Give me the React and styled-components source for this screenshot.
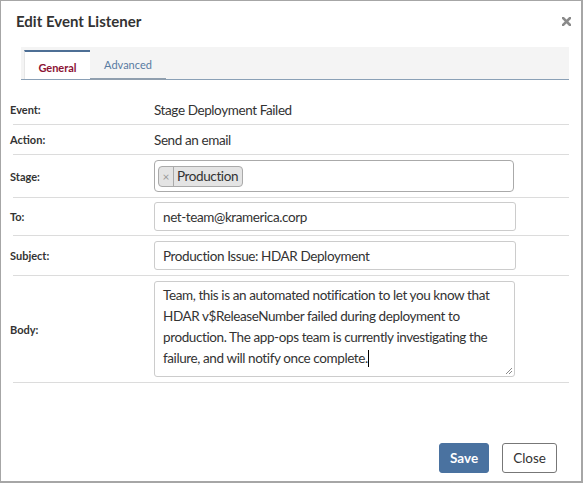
import styled, { createGlobalStyle } from "styled-components";

const GlobalStyle = createGlobalStyle`
  html, body {
    margin: 0;
    padding: 0;
    background: #fff;
  }
  body {
    font-family: "Lato", "Liberation Sans", sans-serif;
    color: #333;
  }
`;

const rows = [
  { label: "Event:", value: "Stage Deployment Failed" },
  { label: "Action:", value: "Send an email" },
];

export default function App() {
  return (
    <>
      <GlobalStyle />
      <Modal>
        <Header>
          <Title>Edit Event Listener</Title>
          <CloseX aria-label="close">
            <svg width="9" height="9" viewBox="0 0 9 9">
              <path d="M1 1 L8 8 M8 1 L1 8" stroke="#8a8a8a" strokeWidth="2.6" strokeLinecap="square" />
            </svg>
          </CloseX>
        </Header>

        <TabBar>
          <Tab $active>General</Tab>
          <Tab>Advanced</Tab>
        </TabBar>

        <Form>
          {rows.map((r) => (
            <Row key={r.label} $pad={5}>
              <Label>{r.label}</Label>
              <Value>{r.value}</Value>
            </Row>
          ))}
          <Row $pad={5}>
            <Label>Stage:</Label>
            <TagBox>
              <Tag>
                <TagRemove>×</TagRemove>
                <TagText>Production</TagText>
              </Tag>
            </TagBox>
          </Row>
          <Row $pad={4}>
            <Label>To:</Label>
            <Input defaultValue="net-team@kramerica.corp" />
          </Row>
          <Row $pad={5}>
            <Label>Subject:</Label>
            <Input defaultValue="Production Issue: HDAR Deployment" />
          </Row>
          <Row $pad={5}>
            <Label>Body:</Label>
            <TextBox>
              Team, this is an automated notification to let you know that
              <br />
              HDAR v$ReleaseNumber failed during deployment to
              <br />
              production. The app-ops team is currently investigating the
              <br />
              failure, and will notify once complete.<Caret />
              <Grip width="8" height="8" viewBox="0 0 8 8">
                <path d="M7 1 L1 7 M7 4 L4 7" stroke="#8a8a8a" strokeWidth="1" />
              </Grip>
            </TextBox>
          </Row>
        </Form>

        <Footer>
          <Button $primary>Save</Button>
          <Button>Close</Button>
        </Footer>
      </Modal>
    </>
  );
}

const Modal = styled.div`
  width: 583px;
  height: 483px;
  box-sizing: border-box;
  border: 1px solid #a6a6a6;
  border-right-width: 2px;
  border-bottom-width: 2px;
  display: flex;
  flex-direction: column;
`;

const Header = styled.div`
  display: flex;
  align-items: center;
  justify-content: space-between;
  padding: 10px 9px 0 15px;
  height: 20px;
`;

const Title = styled.div`
  font-weight: 700;
  font-size: 15px;
  color: #333;
`;

const CloseX = styled.div`
  display: flex;
  width: 12px;
  justify-content: center;
`;

const TabBar = styled.div`
  display: flex;
  align-items: flex-end;
  margin: 16px 12px 0 20px;
  height: 32px;
  background: #f4f4f4;
  border-bottom: 1px solid #8aa0b6;
`;

const Tab = styled.div`
  box-sizing: border-box;
  font-size: 11px;
  ${(p) =>
    p.$active
      ? `
    margin-left: 3px;
    width: 66px;
    height: 29px;
    padding-top: 9px;
    text-align: center;
    background: #fff;
    border-top: 2px solid #4d6f95;
    border-left: 1px solid #e6e6e6;
    color: #8c1234;
    font-weight: 700;
  `
      : `
    width: 76px;
    height: 31px;
    padding-top: 9px;
    text-align: center;
    color: #587ba2;
    border-bottom: 2px solid #909fae;
    margin-bottom: -1px;
  `}
`;

const Form = styled.div`
  margin-top: 15px;
  padding: 0 12px 0 12px;
`;

const Row = styled.div`
  display: flex;
  align-items: center;
  padding: ${(p) => p.$pad}px 0;
  border-bottom: 1px solid #dcdcdc;
  min-height: 19px;
`;

const Label = styled.div`
  width: 141px;
  margin-left: -3px;
  flex-shrink: 0;
  font-size: 11px;
  font-weight: 700;
  color: #333;
`;

const Value = styled.div`
  font-size: 13.5px;
  letter-spacing: -0.4px;
  color: #333;
  padding-left: 3px;
`;

const TagBox = styled.div`
  box-sizing: border-box;
  margin-left: 3px;
  width: 360px;
  height: 32px;
  border: 1px solid #aaa;
  border-radius: 4px;
  display: flex;
  align-items: center;
  padding-left: 3px;
`;

const Tag = styled.div`
  display: flex;
  align-items: stretch;
  height: 21px;
  box-sizing: border-box;
  border: 1px solid #aaa;
  border-radius: 4px;
  background: #e4e4e4;
`;

const TagRemove = styled.span`
  width: 14px;
  display: flex;
  align-items: center;
  justify-content: center;
  color: #999;
  font-size: 12px;
  border-right: 1px solid #aaa;
`;

const TagText = styled.span`
  display: flex;
  align-items: center;
  padding: 0 4px 0 3px;
  font-size: 13.5px;
  letter-spacing: -0.4px;
  color: #333;
`;

const Input = styled.input`
  box-sizing: border-box;
  margin-left: 3px;
  width: 362px;
  height: 29px;
  border: 1px solid #ccc;
  border-radius: 3px;
  padding: 0 8px;
  font-family: inherit;
  font-size: 13.5px;
  letter-spacing: -0.4px;
  color: #333;
  outline: none;
`;

const TextBox = styled.div`
  position: relative;
  box-sizing: border-box;
  margin-left: 3px;
  width: 361px;
  height: 96px;
  border: 1px solid #ccc;
  border-radius: 3px;
  padding: 3px 8px;
  font-size: 13.5px;
  letter-spacing: -0.4px;
  line-height: 21px;
  color: #333;
  white-space: nowrap;
`;

const Caret = styled.span`
  display: inline-block;
  width: 1px;
  height: 17px;
  background: #000;
  vertical-align: -4px;
`;

const Grip = styled.svg`
  position: absolute;
  right: 1px;
  bottom: 1px;
`;

const Footer = styled.div`
  margin-top: auto;
  display: flex;
  justify-content: flex-end;
  gap: 13px;
  padding: 0 24px 8px 0;
`;

const Button = styled.button`
  box-sizing: border-box;
  height: 30px;
  padding: 0 10px;
  border-radius: 3px;
  font-family: inherit;
  font-size: 13.5px;
  cursor: pointer;
  ${(p) =>
    p.$primary
      ? `
    background: #4a72a0;
    border: 1px solid #4a72a0;
    color: #fff;
    font-weight: 700;
  `
      : `
    background: #fff;
    border: 1px solid #777;
    color: #333;
  `}
`;
